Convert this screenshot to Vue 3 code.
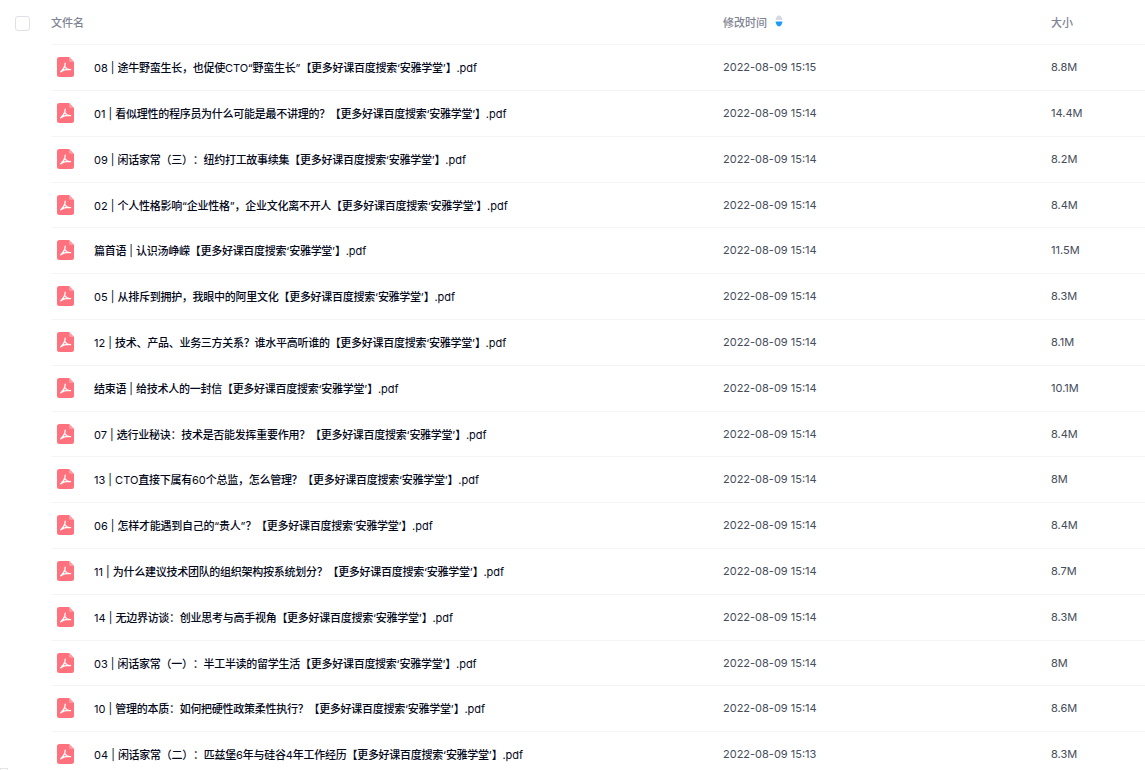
<script setup>
const raw = [
  ['08 | 途牛野蛮生长，也促使CTO“野蛮生长”【更多好课百度搜索‘安雅学堂’】.pdf', '2022-08-09 15:15', '8.8M'],
  ['01 | 看似理性的程序员为什么可能是最不讲理的？【更多好课百度搜索‘安雅学堂’】.pdf', '2022-08-09 15:14', '14.4M'],
  ['09 | 闲话家常（三）：纽约打工故事续集【更多好课百度搜索‘安雅学堂’】.pdf', '2022-08-09 15:14', '8.2M'],
  ['02 | 个人性格影响“企业性格”，企业文化离不开人【更多好课百度搜索‘安雅学堂’】.pdf', '2022-08-09 15:14', '8.4M'],
  ['篇首语 | 认识汤峥嵘【更多好课百度搜索‘安雅学堂’】.pdf', '2022-08-09 15:14', '11.5M'],
  ['05 | 从排斥到拥护，我眼中的阿里文化【更多好课百度搜索‘安雅学堂’】.pdf', '2022-08-09 15:14', '8.3M'],
  ['12 | 技术、产品、业务三方关系？谁水平高听谁的【更多好课百度搜索‘安雅学堂’】.pdf', '2022-08-09 15:14', '8.1M'],
  ['结束语 | 给技术人的一封信【更多好课百度搜索‘安雅学堂’】.pdf', '2022-08-09 15:14', '10.1M'],
  ['07 | 选行业秘诀：技术是否能发挥重要作用？【更多好课百度搜索‘安雅学堂’】.pdf', '2022-08-09 15:14', '8.4M'],
  ['13 | CTO直接下属有60个总监，怎么管理？【更多好课百度搜索‘安雅学堂’】.pdf', '2022-08-09 15:14', '8M'],
  ['06 | 怎样才能遇到自己的“贵人”？【更多好课百度搜索‘安雅学堂’】.pdf', '2022-08-09 15:14', '8.4M'],
  ['11 | 为什么建议技术团队的组织架构按系统划分？【更多好课百度搜索‘安雅学堂’】.pdf', '2022-08-09 15:14', '8.7M'],
  ['14 | 无边界访谈：创业思考与高手视角【更多好课百度搜索‘安雅学堂’】.pdf', '2022-08-09 15:14', '8.3M'],
  ['03 | 闲话家常（一）：半工半读的留学生活【更多好课百度搜索‘安雅学堂’】.pdf', '2022-08-09 15:14', '8M'],
  ['10 | 管理的本质：如何把硬性政策柔性执行？【更多好课百度搜索‘安雅学堂’】.pdf', '2022-08-09 15:14', '8.6M'],
  ['04 | 闲话家常（二）：匹兹堡6年与硅谷4年工作经历【更多好课百度搜索‘安雅学堂’】.pdf', '2022-08-09 15:13', '8.3M'],
]
const cjk = /([\u3000-\u9fff\uff00-\uffef]+)/
const files = raw.map(([name, date, size]) => ({
  name,
  date,
  size,
  runs: name.split(cjk).filter(Boolean).map((text) => ({ text, wide: cjk.test(text) })),
}))
</script>

<template>
  <div class="page">
    <div class="head">
      <span class="check"></span>
      <div class="line head-line">
        <span class="name title">文件名</span>
        <span class="date title sortable">修改时间
          <svg class="sort" width="8" height="12" viewBox="0 0 8 12">
            <path d="M0.5 5C0.8 2.4 2.2 0.5 4 0.5S7.2 2.4 7.5 5Z" fill="#d5d9e2" />
            <path d="M0.5 6.6H7.5C7.2 9.2 5.8 11.4 4 11.4S0.8 9.2 0.5 6.6Z" fill="#1e9bf5" />
          </svg>
        </span>
        <span class="size title">大小</span>
      </div>
    </div>
    <div v-for="f in files" :key="f.name" class="line row">
      <div class="name cell">
        <svg class="pdf" width="17" height="20" viewBox="0 0 17 20">
          <path d="M2.5 0H12L17 5V17.5A2.5 2.5 0 0 1 14.5 20H2.5A2.5 2.5 0 0 1 0 17.5V2.5A2.5 2.5 0 0 1 2.5 0Z" fill="#fe717d" />
          <path d="M12 0L17 5H13.5A1.5 1.5 0 0 1 12 3.5Z" fill="#ff9aa3" />
          <path d="M8.2 6.2C8.2 8.6 6.6 12 3.8 14.8M8.2 10C9.2 11.6 11 12.8 13.6 12.6C11 12.2 7 12.6 3.8 14.8" fill="none" stroke="#fff" stroke-width="1.3" stroke-linecap="round" stroke-linejoin="round" />
        </svg>
        <span class="file"><span v-for="(r, i) in f.runs" :key="i" :class="{ wide: r.wide }">{{ r.text }}</span></span>
      </div>
      <span class="date">{{ f.date }}</span>
      <span class="size">{{ f.size }}</span>
    </div>
    <span class="corner"></span>
  </div>
</template>

<style>
html, body { background: #fff; overflow: hidden; }
</style>

<style scoped>
.page {
  position: relative;
  width: 1145px;
  height: 770px;
  overflow: hidden;
  font-family: Inter, "Noto Sans CJK SC", sans-serif;
  font-size: 11px;
  color: #454d5a;
  text-spacing-trim: space-all;
}
.head {
  display: flex;
  align-items: stretch;
  height: 45.3px;
}
.check {
  width: 13px;
  height: 13px;
  margin: 16px 21px 0 15px;
  border: 1px solid #dfe1e8;
  border-radius: 3px;
  flex: none;
}
.line {
  display: flex;
  align-items: center;
  border-bottom: 1px solid #f5f5f6;
  box-sizing: border-box;
}
.head-line {
  flex: 1;
  padding-bottom: 1px;
}
.row {
  height: 45.8px;
  margin-left: 51px;
  padding-bottom: 1px;
}
.name { width: 672px; flex: none; }
.date { width: 328px; flex: none; }
.title { color: #7f8494; font-weight: 500; }
.sortable { display: flex; align-items: center; }
.cell {
  display: flex;
  align-items: center;
  padding-left: 6px;
  box-sizing: border-box;
}
.pdf { flex: none; margin-right: 20px; }
.file { color: #03081a; white-space: nowrap; }
.wide { letter-spacing: -0.27px; font-weight: 500; }
.sort { margin-left: 8px; margin-top: -2px; }
.corner {
  position: absolute;
  left: 0;
  top: 768px;
  width: 6px;
  height: 6px;
  border: 1px solid #e4e4e4;
}
</style>
